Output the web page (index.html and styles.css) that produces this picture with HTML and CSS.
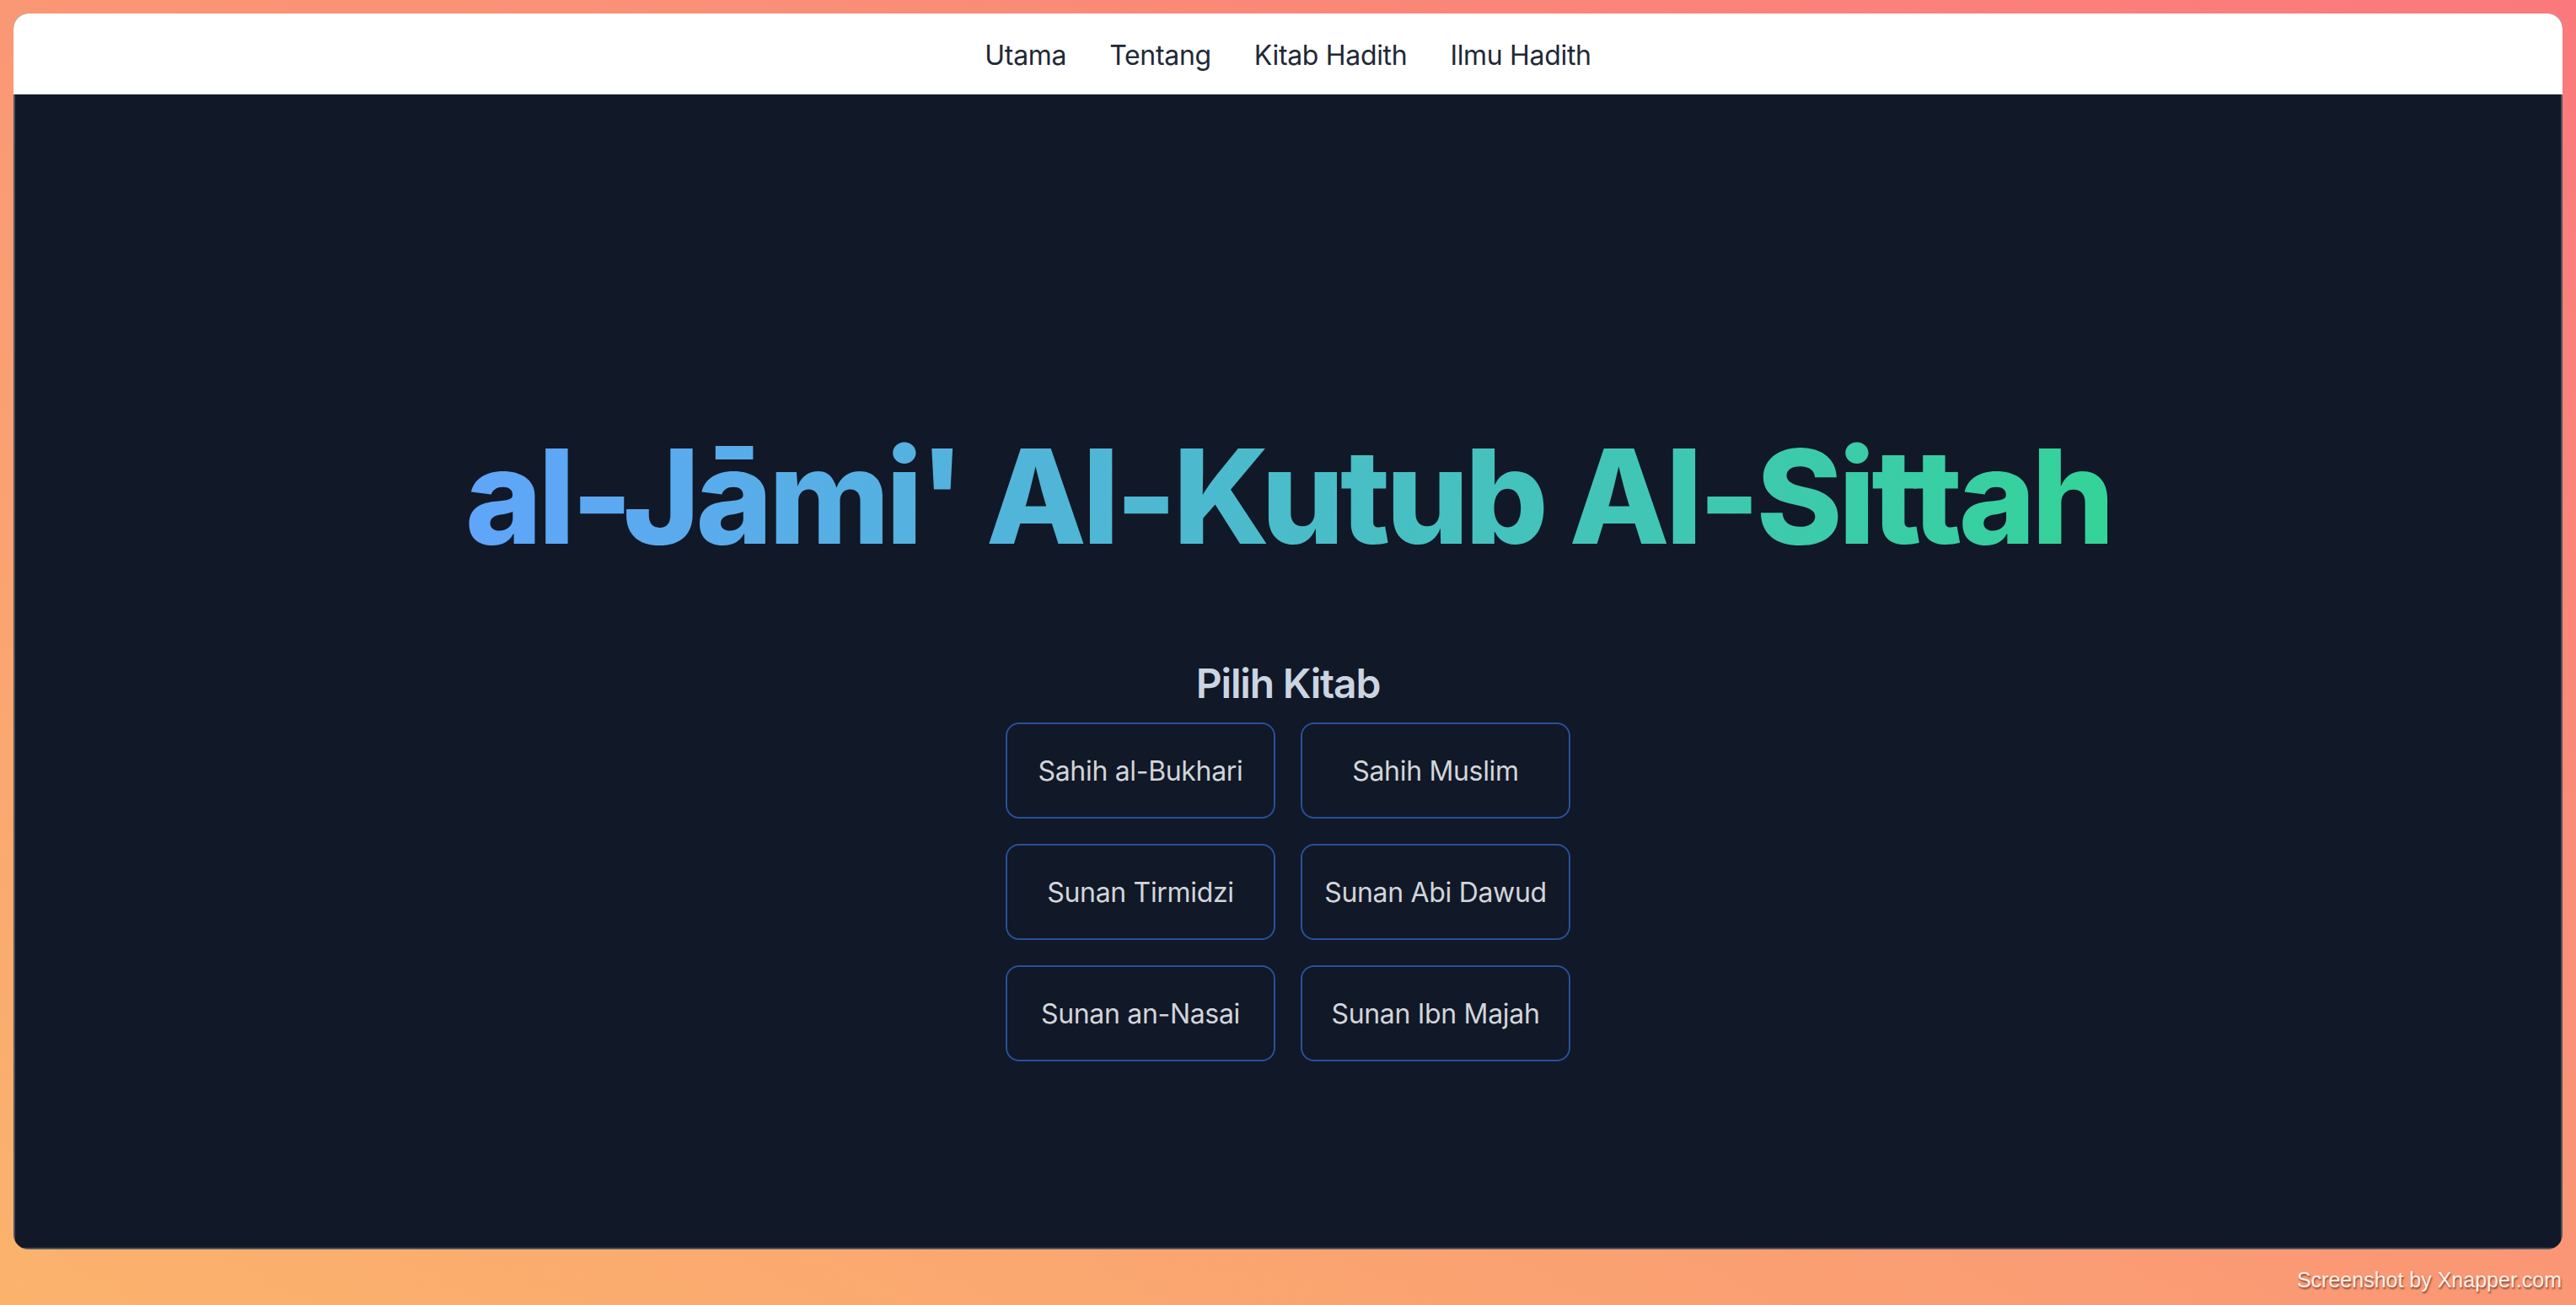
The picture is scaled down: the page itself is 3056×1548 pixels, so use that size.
FILE: index.html
```html
<!DOCTYPE html>
<html lang="id">
<head>
<meta charset="utf-8">
<title>al-Jāmi' Al-Kutub Al-Sittah</title>
<link rel="stylesheet" href="styles.css">
</head>
<body>
<div class="window">
  <nav class="nav">
    <a class="nav-link" href="#">Utama</a>
    <a class="nav-link" href="#">Tentang</a>
    <a class="nav-link" href="#">Kitab Hadith</a>
    <a class="nav-link" href="#">Ilmu Hadith</a>
  </nav>
  <main class="main">
    <h1 class="title">al-Jāmi' Al-Kutub Al-Sittah</h1>
    <h2 class="subtitle">Pilih Kitab</h2>
    <div class="books">
      <a class="book" href="#">Sahih al-Bukhari</a>
      <a class="book" href="#">Sahih Muslim</a>
      <a class="book" href="#">Sunan Tirmidzi</a>
      <a class="book" href="#">Sunan Abi Dawud</a>
      <a class="book" href="#">Sunan an-Nasai</a>
      <a class="book" href="#">Sunan Ibn Majah</a>
    </div>
  </main>
</div>
<div class="watermark">Screenshot by Xnapper.com</div>
</body>
</html>
```

FILE: styles.css
```css
* { box-sizing: border-box; }
html, body { margin: 0; padding: 0; }
body {
  width: 3056px;
  height: 1548px;
  padding: 16px;
  background: linear-gradient(to top right, #fbb36c 0%, #fa9a74 45%, #fb797c 100%);
  font-family: Inter, "Noto Sans", sans-serif;
  position: relative;
  overflow: hidden;
}
.window {
  width: 3024px;
  height: 1466px;
  border-radius: 18px;
  overflow: hidden;
  display: flex;
  flex-direction: column;
  background: #111827;
}
.nav {
  height: 96px;
  flex: none;
  padding-top: 3px;
  background: #ffffff;
  display: flex;
  justify-content: center;
  align-items: center;
  gap: 51px;
}
.nav-link {
  font-size: 32px;
  letter-spacing: -0.01em;
  color: #1f2937;
  text-decoration: none;
  line-height: 48px;
}
.main {
  flex: 1;
  display: flex;
  flex-direction: column;
  align-items: center;
  padding-top: 399px;
  box-shadow: inset 2px 0 0 rgba(255,255,255,.25), inset -2px 0 0 rgba(255,255,255,.25), inset 0 -2px 0 rgba(255,255,255,.25);
}
.title {
  margin: 0;
  font-size: 155px;
  line-height: 156px;
  font-weight: 800;
  letter-spacing: -0.0305em;
  background: linear-gradient(to right, #60a5fa, #34d399);
  -webkit-background-clip: text;
  background-clip: text;
  color: transparent;
  white-space: nowrap;
}
.subtitle {
  margin: 112px 0 0;
  font-size: 48px;
  line-height: 64px;
  font-weight: 600;
  letter-spacing: -0.025em;
  color: #cbd5e1;
}
.books {
  margin-top: 14px;
  display: grid;
  grid-template-columns: 320px 320px;
  gap: 30px;
}
.book {
  height: 114px;
  border: 2px solid #28509a;
  border-radius: 16px;
  display: flex;
  align-items: center;
  justify-content: center;
  font-size: 32px;
  letter-spacing: -0.01em;
  color: #d1d5db;
  text-decoration: none;
}
.watermark {
  position: absolute;
  right: 17px;
  bottom: 15px;
  font-family: "Liberation Sans", Arial, sans-serif;
  font-size: 25px;
  color: #fdf1ec;
  text-shadow: 1px 2px 2px rgba(90, 35, 15, 0.7);
}
```
